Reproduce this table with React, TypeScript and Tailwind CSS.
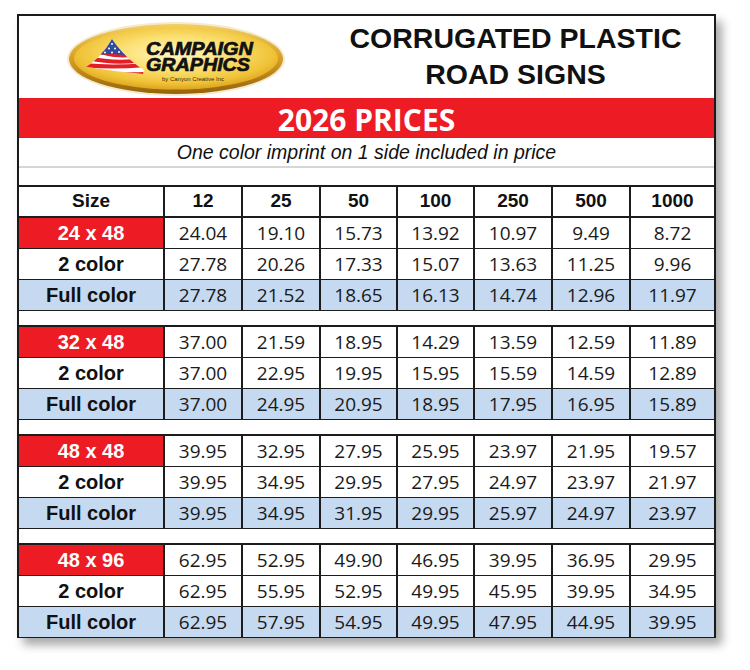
// Corrugated plastic road-sign price sheet, laid out like the printed
// spreadsheet: logo + title header, red year band, and the price grid
// grouped by sign size (one colour / 2 colour / full colour rows).

const ARIAL = "font-['Liberation_Sans',Arial,sans-serif]";
const NUM = "font-['Open_Sans',sans-serif]";
const COLS = "grid grid-cols-[146px_78px_78px_77px_77px_78px_78px_1fr]";

type Block = { size: string; one: string[]; two: string[]; full: string[] };

const QTY = ["12", "25", "50", "100", "250", "500", "1000"];

const BLOCKS: Block[] = [
  {
    size: "24 x 48",
    one: ["24.04", "19.10", "15.73", "13.92", "10.97", "9.49", "8.72"],
    two: ["27.78", "20.26", "17.33", "15.07", "13.63", "11.25", "9.96"],
    full: ["27.78", "21.52", "18.65", "16.13", "14.74", "12.96", "11.97"],
  },
  {
    size: "32 x 48",
    one: ["37.00", "21.59", "18.95", "14.29", "13.59", "12.59", "11.89"],
    two: ["37.00", "22.95", "19.95", "15.95", "15.59", "14.59", "12.89"],
    full: ["37.00", "24.95", "20.95", "18.95", "17.95", "16.95", "15.89"],
  },
  {
    size: "48 x 48",
    one: ["39.95", "32.95", "27.95", "25.95", "23.97", "21.95", "19.57"],
    two: ["39.95", "34.95", "29.95", "27.95", "24.97", "23.97", "21.97"],
    full: ["39.95", "34.95", "31.95", "29.95", "25.97", "24.97", "23.97"],
  },
  {
    size: "48 x 96",
    one: ["62.95", "52.95", "49.90", "46.95", "39.95", "36.95", "29.95"],
    two: ["62.95", "55.95", "52.95", "49.95", "45.95", "39.95", "34.95"],
    full: ["62.95", "57.95", "54.95", "49.95", "47.95", "44.95", "39.95"],
  },
];

function Logo() {
  return (
    <svg width="222" height="78" viewBox="0 0 222 78" className="ml-[47px] mt-[4px] shrink-0">
      <defs>
        <linearGradient id="rim" x1="0" y1="0" x2="0" y2="1">
          <stop offset="0" stopColor="#f3cf62" />
          <stop offset="0.5" stopColor="#d79f22" />
          <stop offset="1" stopColor="#95630a" />
        </linearGradient>
        <radialGradient id="face" cx="0.5" cy="0.42" r="0.6">
          <stop offset="0" stopColor="#fff7c4" />
          <stop offset="0.45" stopColor="#fbe072" />
          <stop offset="0.8" stopColor="#f0c236" />
          <stop offset="1" stopColor="#d99f1e" />
        </radialGradient>
        <clipPath id="flag">
          <path d="M46,19 C52,28 61,39 78,50 L77,54 C58,52 40,50 20,47 C31,40 39,31 46,19 Z" />
        </clipPath>
      </defs>
      <ellipse cx="110" cy="39" rx="109" ry="37" fill="#f4ead0" />
      <ellipse cx="110" cy="39" rx="107" ry="35" fill="url(#rim)" />
      <ellipse cx="110" cy="38.5" rx="102" ry="31" fill="url(#face)" />

      <g clipPath="url(#flag)">
        <rect x="18" y="17" width="62" height="40" fill="#ffffff" />
        <path d="M16,45 C36,47 56,47 80,45" stroke="#e31e26" strokeWidth="4" fill="none" />
        <path d="M22,38 C40,42 58,44 80,39" stroke="#e31e26" strokeWidth="4" fill="none" />
        <path d="M30,31 C46,36 60,38 80,32" stroke="#e31e26" strokeWidth="3.5" fill="none" />
        <path d="M18,53 C40,54 60,55 80,54" stroke="#e31e26" strokeWidth="4" fill="none" />
        <path d="M46,17 L63,36 C54,34 44,33 33,35 Z" fill="#2f4aa0" />
        <circle cx="46" cy="24" r="1" fill="#fff" />
        <circle cx="43" cy="28.5" r="1" fill="#fff" />
        <circle cx="49" cy="28.5" r="1" fill="#fff" />
        <circle cx="46" cy="32.5" r="1" fill="#fff" />
        <circle cx="53" cy="32" r="1" fill="#fff" />
        <circle cx="39" cy="32.5" r="1" fill="#fff" />
      </g>

      <g
        fontFamily="'Liberation Sans', Arial, sans-serif"
        fontWeight="700"
        fontStyle="italic"
        fill="#111"
        stroke="#111"
        strokeWidth="0.7"
      >
        <text x="80" y="35" fontSize="18" textLength="107" lengthAdjust="spacingAndGlyphs">CAMPAIGN</text>
        <text x="80" y="51" fontSize="18" textLength="104" lengthAdjust="spacingAndGlyphs">GRAPHICS</text>
      </g>
      <text
        x="96"
        y="61"
        fontSize="6"
        fontFamily="'Liberation Sans', Arial, sans-serif"
        fill="#3a2a10"
        textLength="62"
        lengthAdjust="spacingAndGlyphs"
      >
        by Canyon Creative Inc
      </text>
    </svg>
  );
}

function PriceRow({
  label,
  values,
  variant,
  last,
}: {
  label: string;
  values: string[];
  variant: "size" | "two" | "full";
  last?: boolean;
}) {
  const labelCls =
    variant === "size"
      ? "bg-[#ed1c24] text-white"
      : variant === "full"
        ? "bg-[#c5d9f1] text-[#111]"
        : "bg-white text-[#111]";
  const cellBg = variant === "full" ? "bg-[#c5d9f1]" : "bg-white";
  return (
    <div className={`${COLS} ${last ? "h-[29px]" : "h-[31px] border-b-2 border-[#1c1c1c]"}`}>
      <div
        className={`flex items-center justify-center border-r-2 border-[#1c1c1c] ${ARIAL} text-[20px] font-bold ${labelCls}`}
      >
        {label}
      </div>
      {values.map((v, i) => (
        <div
          key={i}
          className={`flex items-center justify-center ${i < values.length - 1 ? "border-r-2 border-[#1c1c1c]" : ""} ${NUM} text-[19px] text-[#1a1a1a] ${cellBg}`}
        >
          {v}
        </div>
      ))}
    </div>
  );
}

export default function App() {
  return (
    <div className="min-h-screen w-[750px] bg-white pl-[17px] pt-[14px]">
      <div className="w-[699px] border-2 border-[#1a1a1a] bg-white shadow-[6px_7px_9px_rgba(0,0,0,0.34)]">
        {/* Logo + title */}
        <header className="grid h-[82px] grid-cols-[298px_1fr]">
          <Logo />
          <h1 className={`pt-[4px] text-center text-[28.5px] font-bold leading-[36px] text-[#111] ${ARIAL}`}>
            CORRUGATED PLASTIC
            <br />
            ROAD SIGNS
          </h1>
        </header>

        <div className={`flex h-[40px] items-center justify-center bg-[#ed1c24] pt-[2px] ${NUM} text-[30px] font-bold text-white`}>
          2026 PRICES
        </div>

        <div
          className={`flex h-[30px] items-center justify-center border-b-2 border-[#d6d6d6] pt-[2px] ${ARIAL} text-[19.5px] italic text-[#111]`}
        >
          One color imprint on 1 side included in price
        </div>

        <div className="h-[17px]" />

        {/* Price grid */}
        <div className="border-t-2 border-[#1c1c1c]">
          <div className={`${COLS} h-[31px] border-b-2 border-[#1c1c1c] ${ARIAL} text-[19px] font-bold text-[#111]`}>
            <div className="flex items-center justify-center border-r-2 border-[#1c1c1c]">Size</div>
            {QTY.map((q, i) => (
              <div
                key={q}
                className={`flex items-center justify-center ${i < QTY.length - 1 ? "border-r-2 border-[#1c1c1c]" : ""}`}
              >
                {q}
              </div>
            ))}
          </div>

          {BLOCKS.map((b, bi) => {
            const isLast = bi === BLOCKS.length - 1;
            return (
              <div key={b.size}>
                <PriceRow label={b.size} values={b.one} variant="size" />
                <PriceRow label="2 color" values={b.two} variant="two" />
                <PriceRow label="Full color" values={b.full} variant="full" last={isLast} />
                {!isLast && <div className="h-[16px] border-b-2 border-[#1c1c1c] bg-white" />}
              </div>
            );
          })}
        </div>
      </div>
    </div>
  );
}
